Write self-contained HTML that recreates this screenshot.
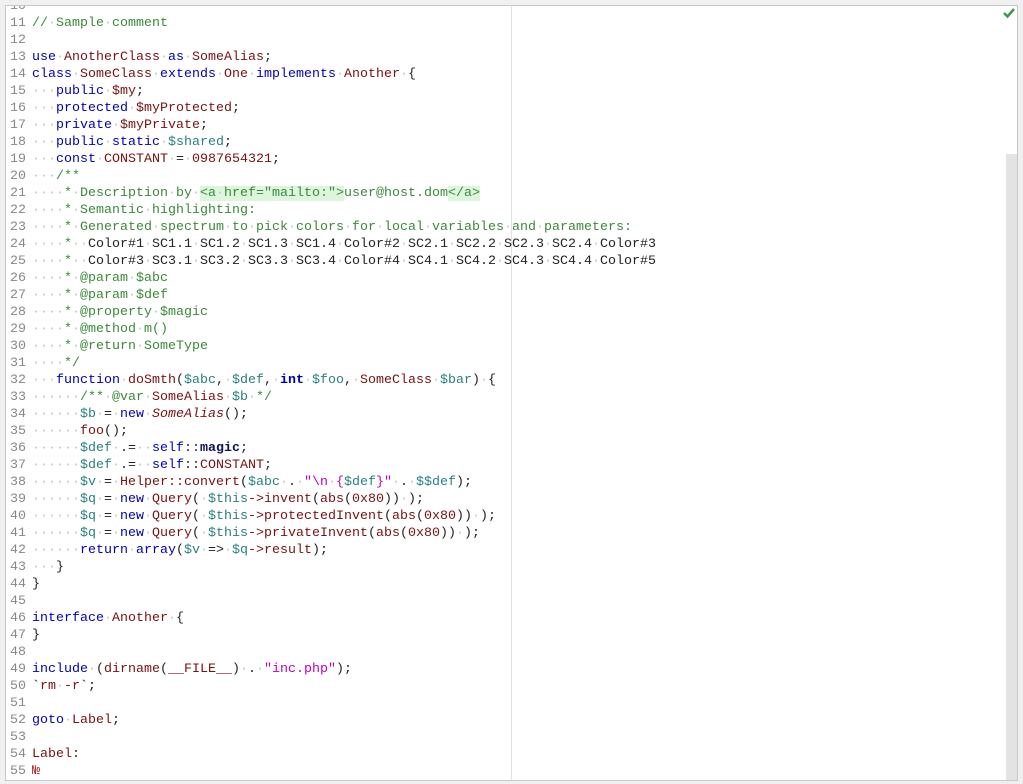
<!DOCTYPE html>
<html><head><meta charset="utf-8"><style>
html,body{margin:0;padding:0;background:#f0f0f0;width:1023px;height:784px;overflow:hidden}
#ed{position:absolute;left:5px;top:5px;width:1011px;height:774px;background:#fff;border:1px solid #c8c8c8;overflow:hidden}
#margin{position:absolute;left:505px;top:0;width:1px;height:100%;background:#e0e0e0}
#sb{position:absolute;left:1000px;top:148px;width:11px;height:630px;background:#e3e3e3}
#chk{position:absolute;left:996px;top:1px}
#code{position:absolute;left:0;top:-8px;font-family:"Liberation Mono","Courier New",monospace;font-size:13.33px;line-height:17px;color:#222}
.l{height:17px;white-space:pre}
.g{display:inline-block;width:20px;text-align:right;color:#888;margin-right:6px}
i{font-style:normal;color:#c4c4c4}
.k{color:#0000b8}.c{color:#7a1010}.v{color:#2a8080}.m{color:#3a8a3a}.s{color:#c000c0}.n{color:#7a1010}.b{font-weight:bold}.it{font-style:italic;color:#7a1010}
.h{background:#dcf5dc}
</style></head><body>
<div id="ed">
<div id="margin"></div>
<div id="sb"></div>
<svg id="chk" width="14" height="12" viewBox="0 0 14 12"><path d="M2 6 L5.5 9.5 L12 2" stroke="#3c9a4c" stroke-width="2.6" fill="none"/></svg>
<div id="code"><div class="l"><span class="g">10</span></div><div class="l"><span class="g">11</span><span class="m">//<i>·</i>Sample<i>·</i>comment</span></div><div class="l"><span class="g">12</span></div><div class="l"><span class="g">13</span><span class="k">use</span><i>·</i><span class="c">AnotherClass</span><i>·</i><span class="k">as</span><i>·</i><span class="c">SomeAlias</span>;</div><div class="l"><span class="g">14</span><span class="k">class</span><i>·</i><span class="c">SomeClass</span><i>·</i><span class="k">extends</span><i>·</i><span class="c">One</span><i>·</i><span class="k">implements</span><i>·</i><span class="c">Another</span><i>·</i>{</div><div class="l"><span class="g">15</span><i>···</i><span class="k">public</span><i>·</i><span class="c">$my</span>;</div><div class="l"><span class="g">16</span><i>···</i><span class="k">protected</span><i>·</i><span class="c">$myProtected</span>;</div><div class="l"><span class="g">17</span><i>···</i><span class="k">private</span><i>·</i><span class="c">$myPrivate</span>;</div><div class="l"><span class="g">18</span><i>···</i><span class="k">public</span><i>·</i><span class="k">static</span><i>·</i><span class="v">$shared</span>;</div><div class="l"><span class="g">19</span><i>···</i><span class="k">const</span><i>·</i><span class="c">CONSTANT</span><i>·</i>=<i>·</i><span class="n">0987654321</span>;</div><div class="l"><span class="g">20</span><i>···</i><span class="m">/**</span></div><div class="l"><span class="g">21</span><i>····</i><span class="m">*<i>·</i>Description<i>·</i>by<i>·</i><span class="h">&lt;a<i>·</i>href="mailto:"&gt;</span>user@host.dom<span class="h">&lt;/a&gt;</span></span></div><div class="l"><span class="g">22</span><i>····</i><span class="m">*<i>·</i>Semantic<i>·</i>highlighting:</span></div><div class="l"><span class="g">23</span><i>····</i><span class="m">*<i>·</i>Generated<i>·</i>spectrum<i>·</i>to<i>·</i>pick<i>·</i>colors<i>·</i>for<i>·</i>local<i>·</i>variables<i>·</i>and<i>·</i>parameters:</span></div><div class="l"><span class="g">24</span><i>····</i><span class="m">*<i>·</i></span><i>·</i>Color#1<i>·</i>SC1.1<i>·</i>SC1.2<i>·</i>SC1.3<i>·</i>SC1.4<i>·</i>Color#2<i>·</i>SC2.1<i>·</i>SC2.2<i>·</i>SC2.3<i>·</i>SC2.4<i>·</i>Color#3</div><div class="l"><span class="g">25</span><i>····</i><span class="m">*<i>·</i></span><i>·</i>Color#3<i>·</i>SC3.1<i>·</i>SC3.2<i>·</i>SC3.3<i>·</i>SC3.4<i>·</i>Color#4<i>·</i>SC4.1<i>·</i>SC4.2<i>·</i>SC4.3<i>·</i>SC4.4<i>·</i>Color#5</div><div class="l"><span class="g">26</span><i>····</i><span class="m">*<i>·</i>@param<i>·</i>$abc</span></div><div class="l"><span class="g">27</span><i>····</i><span class="m">*<i>·</i>@param<i>·</i>$def</span></div><div class="l"><span class="g">28</span><i>····</i><span class="m">*<i>·</i>@property<i>·</i>$magic</span></div><div class="l"><span class="g">29</span><i>····</i><span class="m">*<i>·</i>@method<i>·</i>m()</span></div><div class="l"><span class="g">30</span><i>····</i><span class="m">*<i>·</i>@return<i>·</i>SomeType</span></div><div class="l"><span class="g">31</span><i>····</i><span class="m">*/</span></div><div class="l"><span class="g">32</span><i>···</i><span class="k">function</span><i>·</i><span class="c">doSmth</span>(<span class="v">$abc</span>,<i>·</i><span class="v">$def</span>,<i>·</i><span class="k b">int</span><i>·</i><span class="v">$foo</span>,<i>·</i><span class="c">SomeClass</span><i>·</i><span class="v">$bar</span>)<i>·</i>{</div><div class="l"><span class="g">33</span><i>······</i><span class="m">/**<i>·</i>@var<i>·</i></span><span class="c">SomeAlias</span><i>·</i><span class="v">$b</span><i>·</i><span class="m">*/</span></div><div class="l"><span class="g">34</span><i>······</i><span class="v">$b</span><i>·</i>=<i>·</i><span class="k">new</span><i>·</i><span class="it">SomeAlias</span>();</div><div class="l"><span class="g">35</span><i>······</i><span class="c">foo</span>();</div><div class="l"><span class="g">36</span><i>······</i><span class="v">$def</span><i>·</i>.=<i>··</i><span class="k">self</span>::<span class="b" style="color:#101060">magic</span>;</div><div class="l"><span class="g">37</span><i>······</i><span class="v">$def</span><i>·</i>.=<i>··</i><span class="k">self</span>::<span class="c">CONSTANT</span>;</div><div class="l"><span class="g">38</span><i>······</i><span class="v">$v</span><i>·</i>=<i>·</i><span class="c">Helper::convert</span>(<span class="v">$abc</span><i>·</i>.<i>·</i><span class="s">"\n<i>·</i>{<span class="v">$def</span>}"</span><i>·</i>.<i>·</i><span class="v">$$def</span>);</div><div class="l"><span class="g">39</span><i>······</i><span class="v">$q</span><i>·</i>=<i>·</i><span class="k">new</span><i>·</i><span class="c">Query</span>(<i>·</i><span class="v">$this</span><span class="c">-&gt;invent</span>(<span class="c">abs</span>(<span class="n">0x80</span>))<i>·</i>);</div><div class="l"><span class="g">40</span><i>······</i><span class="v">$q</span><i>·</i>=<i>·</i><span class="k">new</span><i>·</i><span class="c">Query</span>(<i>·</i><span class="v">$this</span><span class="c">-&gt;protectedInvent</span>(<span class="c">abs</span>(<span class="n">0x80</span>))<i>·</i>);</div><div class="l"><span class="g">41</span><i>······</i><span class="v">$q</span><i>·</i>=<i>·</i><span class="k">new</span><i>·</i><span class="c">Query</span>(<i>·</i><span class="v">$this</span><span class="c">-&gt;privateInvent</span>(<span class="c">abs</span>(<span class="n">0x80</span>))<i>·</i>);</div><div class="l"><span class="g">42</span><i>······</i><span class="k">return</span><i>·</i><span class="k">array</span>(<span class="v">$v</span><i>·</i>=&gt;<i>·</i><span class="v">$q</span><span class="c">-&gt;result</span>);</div><div class="l"><span class="g">43</span><i>···</i>}</div><div class="l"><span class="g">44</span>}</div><div class="l"><span class="g">45</span></div><div class="l"><span class="g">46</span><span class="k">interface</span><i>·</i><span class="c">Another</span><i>·</i>{</div><div class="l"><span class="g">47</span>}</div><div class="l"><span class="g">48</span></div><div class="l"><span class="g">49</span><span class="k">include</span><i>·</i>(<span class="c">dirname</span>(<span class="c">__FILE__</span>)<i>·</i>.<i>·</i><span class="s">"inc.php"</span>);</div><div class="l"><span class="g">50</span>`<span class="c">rm<i>·</i>-r</span>`;</div><div class="l"><span class="g">51</span></div><div class="l"><span class="g">52</span><span class="k">goto</span><i>·</i><span class="c">Label</span>;</div><div class="l"><span class="g">53</span></div><div class="l"><span class="g">54</span><span class="c">Label</span>:</div><div class="l"><span class="g">55</span><span style="color:#b02020">№</span></div></div>
</div>
</body></html>
